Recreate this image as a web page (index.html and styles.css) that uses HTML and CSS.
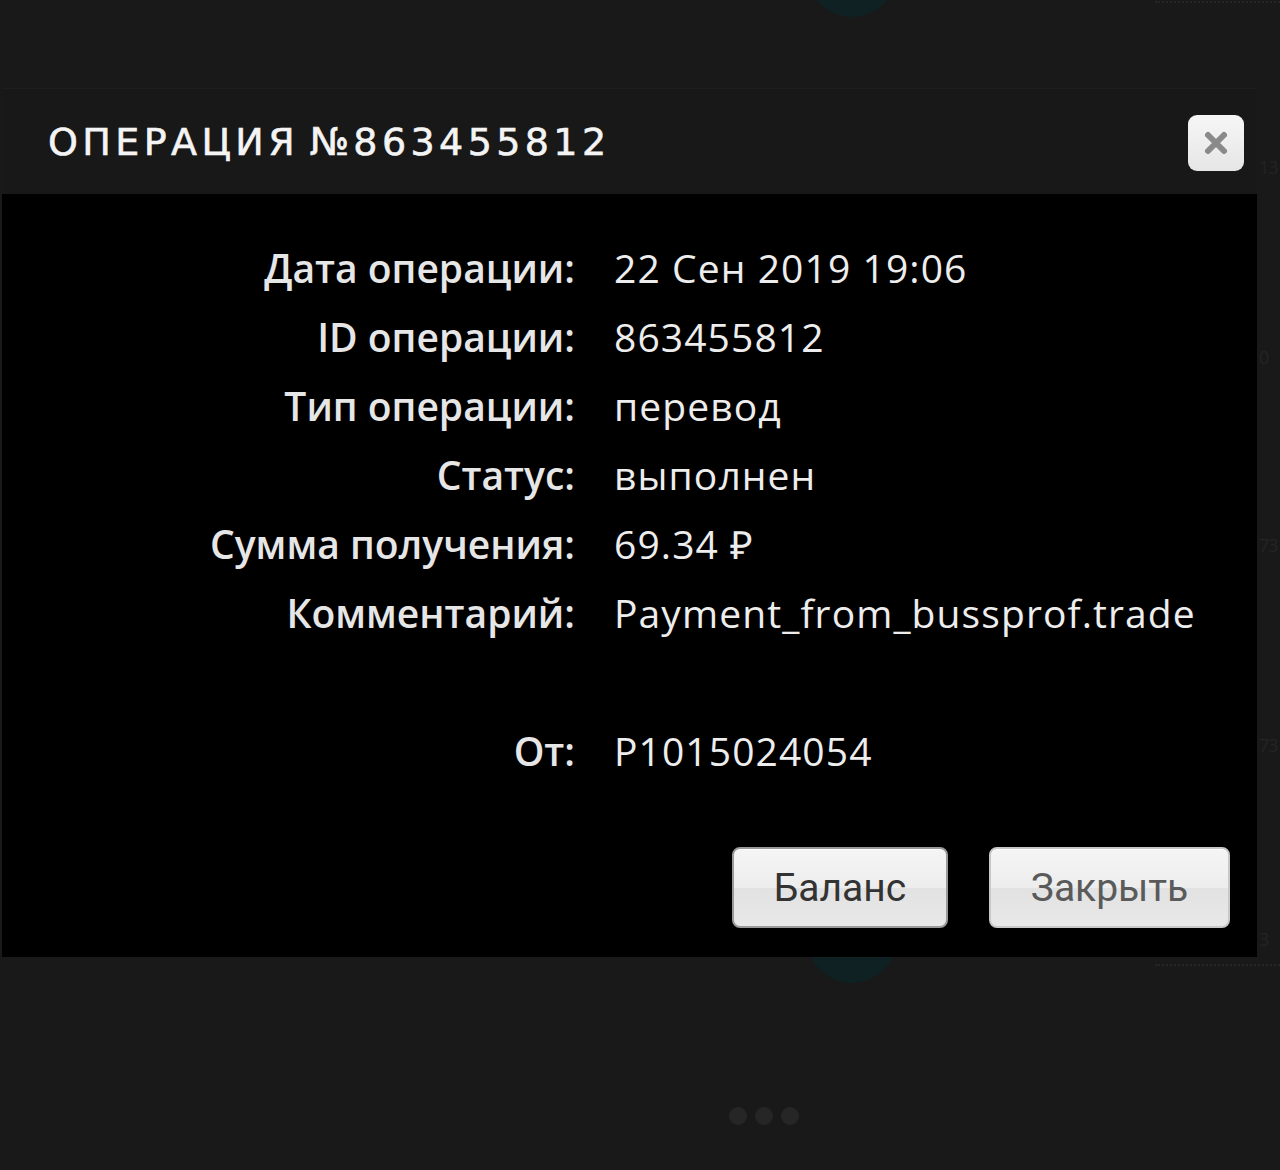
FILE: index.html
```html
<!DOCTYPE html>
<html lang="ru">

<head>
    <meta charset="UTF-8" />
    <meta name="viewport" content="width=device-width, initial-scale=1.0" />
    <title>Операция №863455812</title>
    <link rel="stylesheet" href="styles.css">
</head>

<body>
    <!-- Page behind the overlay -->
    <div class="backdrop">
        <span class="blob blob-top"></span>
        <span class="blob blob-bottom"></span>
        <span class="dots-line line-top"></span>
        <span class="dots-line line-bottom"></span>
        <span class="ghost g1">13</span>
        <span class="ghost g2">0</span>
        <span class="ghost g3">73</span>
        <span class="ghost g4">73</span>
        <span class="ghost g5">3</span>
    </div>

    <!-- Operation dialog -->
    <div class="modal">
        <div class="modal-header">
            <h1 class="modal-title">Операция №863455812</h1>
            <button class="close-btn" aria-label="Закрыть">
                <svg width="26" height="26" viewBox="0 0 26 26">
                    <path d="M5 5 L21 21 M21 5 L5 21" stroke="#8a8a8a" stroke-width="6" stroke-linecap="round" />
                </svg>
            </button>
        </div>

        <div class="modal-body">
            <dl class="details">
                <dt>Дата операции:</dt>
                <dd>22 Сен 2019 19:06</dd>
                <dt>ID операции:</dt>
                <dd>863455812</dd>
                <dt>Тип операции:</dt>
                <dd>перевод</dd>
                <dt>Статус:</dt>
                <dd>выполнен</dd>
                <dt>Сумма получения:</dt>
                <dd>69.34 ₽</dd>
                <dt>Комментарий:</dt>
                <dd>Payment_from_bussprof.trade</dd>
                <dt class="spacer"></dt>
                <dd class="spacer"></dd>
                <dt>От:</dt>
                <dd>P1015024054</dd>
            </dl>

            <div class="actions">
                <button class="btn btn-balance">Баланс</button>
                <button class="btn btn-close">Закрыть</button>
            </div>
        </div>
    </div>

    <!-- Pager dots -->
    <div class="pager">
        <span></span>
        <span></span>
        <span></span>
    </div>
</body>

</html>
```

FILE: styles.css
```css
/* General styling */
body {
    margin: 0;
    background-color: #191919;
    font-family: "Open Sans", sans-serif;
    padding-top: 88px;
    min-height: 1082px;
    position: relative;
    overflow: hidden;
}

/* Faint page content behind the dialog */
.backdrop {
    position: absolute;
    inset: 0;
}

.blob {
    position: absolute;
    width: 90px;
    height: 90px;
    border-radius: 50%;
    background-color: #0f2123;
    left: 807px;
}

.blob-top {
    top: -73px;
}

.blob-bottom {
    top: 893px;
}

.dots-line {
    position: absolute;
    left: 1155px;
    right: 0;
    height: 2px;
    border-top: 2px dotted #262626;
}

.line-top {
    top: 1px;
}

.line-bottom {
    top: 964px;
}

.ghost {
    position: absolute;
    left: 1259px;
    font-size: 18px;
    letter-spacing: -1px;
    color: #242424;
    line-height: 1;
}

.g1 { top: 158px; }
.g2 { top: 348px; }
.g3 { top: 536px; }
.g4 { top: 736px; }
.g5 { top: 930px; }

/* Dialog */
.modal {
    position: relative;
    width: 1255px;
    margin-left: 2px;
}

.modal-header {
    height: 106px;
    display: flex;
    align-items: center;
    justify-content: space-between;
    padding: 0 13px 0 46px;
    background-color: #181818;
    border-top: 1px solid #1e1e1e;
    box-sizing: border-box;
}

.modal-title {
    margin: 0;
    font-family: "DejaVu Sans", sans-serif;
    font-weight: normal;
    font-size: 38px;
    letter-spacing: 4.4px;
    word-spacing: -6px;
    text-transform: uppercase;
    color: #f4f4f4;
    -webkit-text-stroke: 0.6px #f4f4f4;
}

.close-btn {
    width: 56px;
    height: 56px;
    margin-top: 3px;
    border: none;
    border-radius: 9px;
    background: linear-gradient(#f6f6f6, #e6e6e6);
    display: flex;
    align-items: center;
    justify-content: center;
    padding: 0;
}

.modal-body {
    background-color: #000;
    padding: 39px 27px 29px 0;
}

/* Key / value rows */
.details {
    display: grid;
    grid-template-columns: 573px 1fr;
    column-gap: 39px;
    margin: 0;
    font-size: 39px;
    line-height: 69px;
}

.details dt {
    text-align: right;
    font-weight: 600;
    color: #e6e6e6;
    letter-spacing: 0;
}

.details dd {
    margin: 0;
    color: #ededed;
    letter-spacing: 1.1px;
}

.details .spacer {
    height: 69px;
}

/* Bottom buttons */
.actions {
    display: flex;
    justify-content: flex-end;
    gap: 41px;
    margin-top: 62px;
}

.btn {
    height: 81px;
    border: 2px solid #9a9a9a;
    border-radius: 8px;
    background: linear-gradient(#f5f5f5 0%, #ededed 50%, #e2e2e2 51%, #e8e8e8 100%);
    font-family: Roboto, sans-serif;
    font-size: 39px;
    box-shadow: inset 0 1px 0 #fff;
}

.btn-balance {
    width: 216px;
    color: #333;
}

.btn-close {
    width: 241px;
    color: #5a5a5a;
    border-color: #c8c8c8;
}

/* Pager */
.pager {
    position: absolute;
    top: 1107px;
    left: 729px;
    display: flex;
    gap: 8px;
}

.pager span {
    width: 18px;
    height: 18px;
    border-radius: 50%;
    background-color: #262626;
}
```
